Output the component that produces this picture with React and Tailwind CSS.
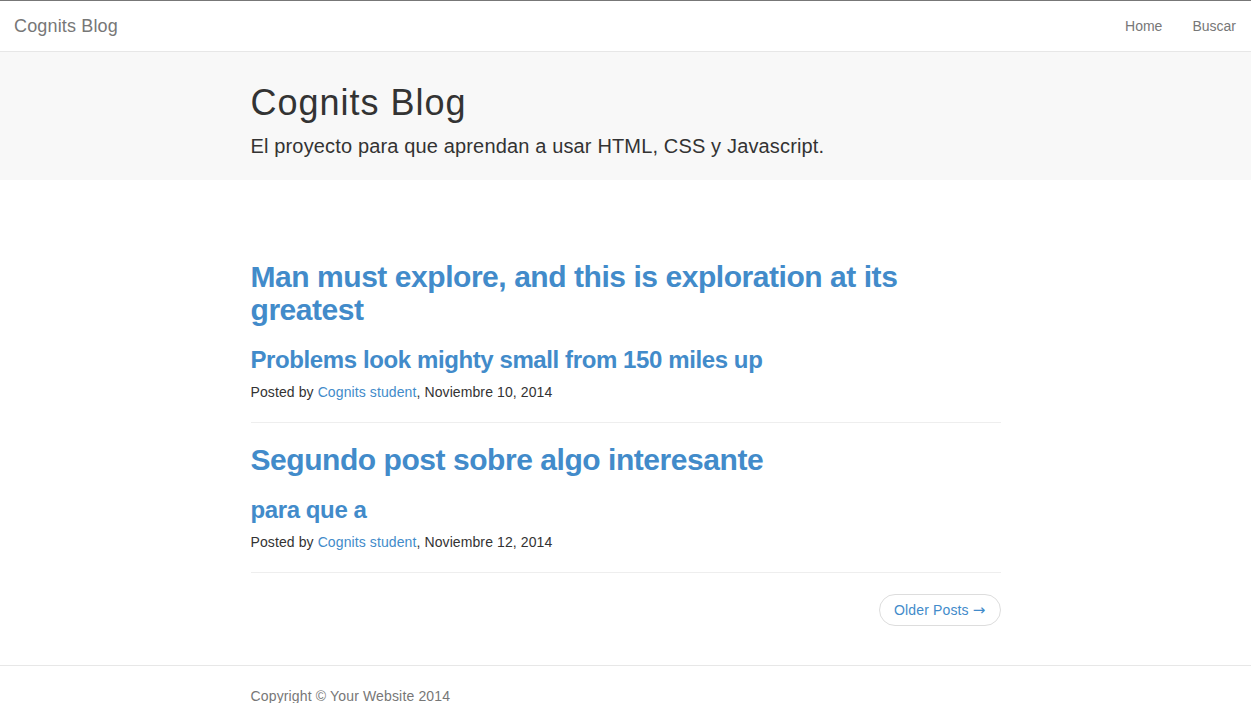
export default function App() {
  const font = { fontFamily: '"Liberation Sans", Arial, sans-serif' };
  return (
    <div className="min-h-[703px] bg-white text-[#333] text-[14px] leading-[20px] border-t border-[#777]" style={font}>
      <nav className="h-[51px] border-b border-[#e7e7e7] bg-white flex items-center justify-between px-[14px]">
        <a className="text-[18px] leading-[20px] text-[#777] tracking-[0.15px]">Cognits Blog</a>
        <div className="flex gap-[30px] text-[14px] text-[#777] pr-px">
          <a>Home</a>
          <a>Buscar</a>
        </div>
      </nav>
      <header className="bg-[#f8f8f8] h-[128px]">
        <div className="w-[750px] mx-auto pt-[31px]">
          <h1 className="text-[36px] leading-[40px] font-medium text-[#333] tracking-[1px]">Cognits Blog</h1>
          <p className="mt-[8px] text-[20px] leading-[30px] font-light text-[#333] tracking-[0.15px]">
            El proyecto para que aprendan a usar HTML, CSS y Javascript.
          </p>
        </div>
      </header>
      <main className="w-[750px] mx-auto pt-[80px]">
        <article>
          <h2 className="text-[30px] leading-[33px] font-bold text-[#428bca] pr-[80px] tracking-[-0.45px]">
            Man must explore, and this is exploration at its greatest
          </h2>
          <h3 className="mt-[20px] text-[24px] leading-[27px] font-bold text-[#428bca] tracking-[-0.4px]">
            Problems look mighty small from 150 miles up
          </h3>
          <p className="mt-[9px] text-[14px] leading-[20px] tracking-[0.1px]">
            Posted by <a className="text-[#428bca]">Cognits student</a>, Noviembre 10, 2014
          </p>
        </article>
        <hr className="mt-[20px] border-0 border-t border-[#eee]" />
        <article className="pt-[20px]">
          <h2 className="text-[30px] leading-[33px] font-bold text-[#428bca] tracking-[-0.45px]">
            Segundo post sobre algo interesante
          </h2>
          <h3 className="mt-[20px] text-[24px] leading-[27px] font-bold text-[#428bca] tracking-[-0.4px]">
            para que a
          </h3>
          <p className="mt-[9px] text-[14px] leading-[20px] tracking-[0.1px]">
            Posted by <a className="text-[#428bca]">Cognits student</a>, Noviembre 12, 2014
          </p>
        </article>
        <hr className="mt-[20px] border-0 border-t border-[#eee]" />
        <div className="flex justify-end mt-[21px]">
          <a className="h-[32px] px-[14px] rounded-full border border-[#ddd] text-[#428bca] text-[14px] flex items-center gap-[4px] tracking-[0.15px]">
            <span>Older Posts</span>
            <span style={{ fontFamily: '"DejaVu Sans", sans-serif' }} className="text-[15px] leading-[20px]">→</span>
          </a>
        </div>
      </main>
      <footer className="mt-[39px] border-t border-[#e7e7e7]">
        <div className="w-[750px] mx-auto pt-[20px] pb-[20px] text-[#777] tracking-[0.15px]">
          Copyright © Your Website 2014
        </div>
      </footer>
    </div>
  );
}
